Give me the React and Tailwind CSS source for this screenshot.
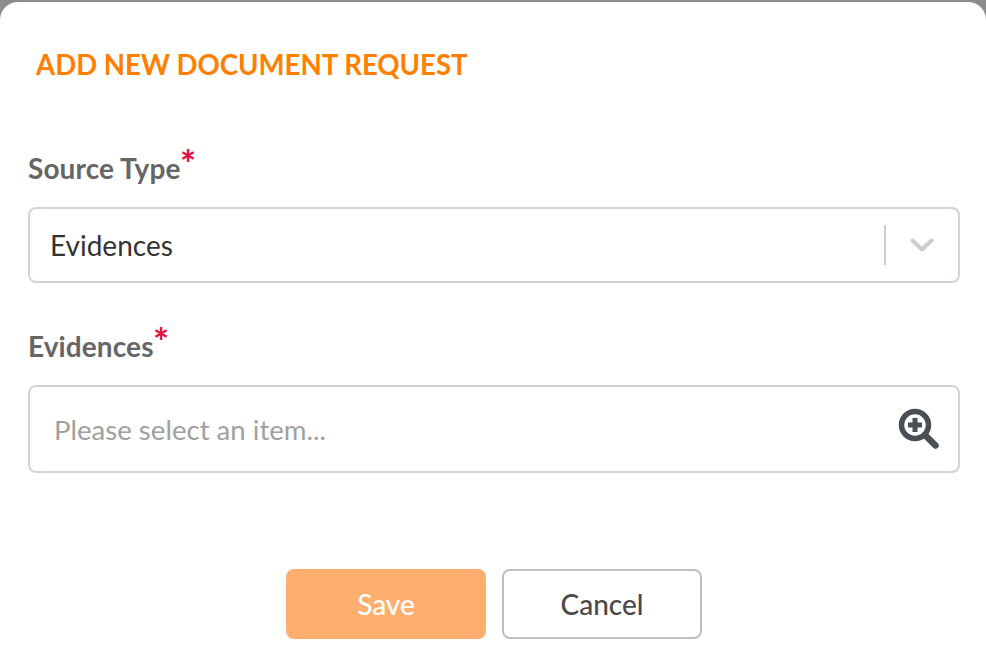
const Label = ({ children }) => (
  <label className="block text-[28px] leading-[34px] font-bold tracking-[0.1px] text-[#666666]">
    {children}
    <span className="relative top-[-1px] -ml-[0.5px] text-[38px] leading-[0] text-[#e0103f]">*</span>
  </label>
);

const App = () => {
  return (
    <div className="h-[656px] w-[986px] overflow-hidden bg-[#8c8c8c] pt-[2px] font-['Lato',sans-serif]">
      <div className="h-[654px] rounded-t-[18px] bg-white pr-[26px] pl-[28px]">
        <h2 className="pt-[44px] pl-[8px] text-[27.6px] leading-[38px] font-bold text-[#ff7f00]">
          ADD NEW DOCUMENT REQUEST
        </h2>

        <div className="mt-[67px]">
          <Label>Source Type</Label>
          <div className="mt-[22px] flex h-[76px] items-center rounded-[8px] border-2 border-[#d0d4d9] pl-[20px]">
            <span className="flex-1 text-[28px] text-[#333333]">Evidences</span>
            <span className="h-[40px] w-[2px] bg-[#cccccc]" />
            <svg className="mr-[24px] ml-[24px] h-[24px] w-[24px]" viewBox="0 0 24 24" fill="none" stroke="#cccccc" strokeWidth="4" strokeLinecap="round" strokeLinejoin="round">
              <path d="M2.5 7.5 12 16.5 21.5 7.5" />
            </svg>
          </div>
        </div>

        <div className="mt-[46px]">
          <Label>Evidences</Label>
          <div className="mt-[22px] flex h-[88px] items-center rounded-[8px] border-2 border-[#d0d4d9] pl-[24px]">
            <span className="relative top-[1px] flex-1 text-[27.6px] text-[#a0a0a0]">Please select an item...</span>
            <svg className="mr-[18px] h-[42px] w-[42px]" viewBox="0 0 42 42" fill="none" stroke="#4a4f55" strokeLinecap="round">
              <circle cx="17" cy="17" r="13.5" strokeWidth="5.5" />
              <path d="M17 10v14M10 17h14" strokeWidth="5" strokeLinecap="butt" />
              <path d="M28 28 37.5 37.5" strokeWidth="6.5" />
            </svg>
          </div>
        </div>

        <div className="mt-[96px] flex justify-center gap-[16px]">
          <button className="h-[70px] w-[200px] rounded-[8px] bg-[#ffae6f] text-[28px] font-medium text-white">Save</button>
          <button className="h-[70px] w-[200px] rounded-[8px] border-2 border-[#bfbfbf] bg-white text-[28px] font-medium text-[#4a4a4a]">Cancel</button>
        </div>
      </div>
    </div>
  );
};

export default App;
